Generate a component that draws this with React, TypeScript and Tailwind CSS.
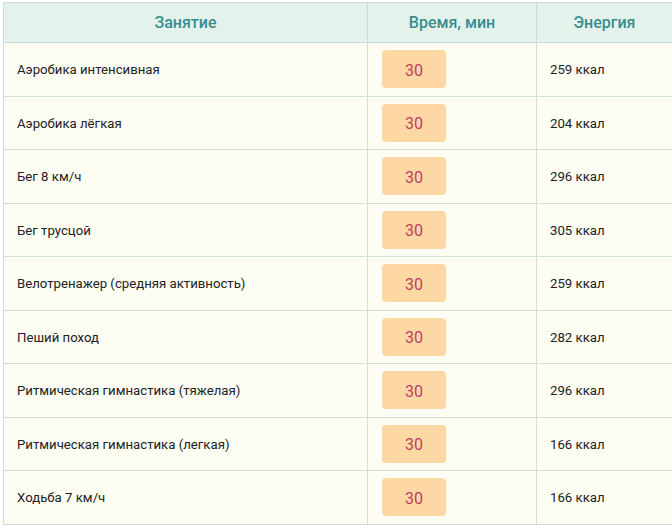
const rows = [
  { name: 'Аэробика интенсивная', kcal: 259 },
  { name: 'Аэробика лёгкая', kcal: 204 },
  { name: 'Бег 8 км/ч', kcal: 296 },
  { name: 'Бег трусцой', kcal: 305 },
  { name: 'Велотренажер (средняя активность)', kcal: 259 },
  { name: 'Пеший поход', kcal: 282 },
  { name: 'Ритмическая гимнастика (тяжелая)', kcal: 296 },
  { name: 'Ритмическая гимнастика (легкая)', kcal: 166 },
  { name: 'Ходьба 7 км/ч', kcal: 166 },
];

export default function App() {
  return (
    <div className="h-[528px] w-[672px] overflow-hidden bg-white pl-[3px] pt-[2px] font-['Roboto',sans-serif]">
      <div className="border-l border-t border-[#c9ddd6] bg-[#fdfdf3]">
        {/* Header */}
        <div className="grid h-[40px] grid-cols-[364px_169px_1fr] border-b border-[#c9ddd6] bg-[#e3f3ec] text-[16px] font-medium text-[#3a8d8e]">
          <div className="flex items-center justify-center border-r border-[#c9ddd6]">Занятие</div>
          <div className="flex items-center justify-center border-r border-[#c9ddd6]">Время, мин</div>
          <div className="flex items-center justify-center">Энергия</div>
        </div>

        {/* Rows */}
        {rows.map((r) => (
          <div
            key={r.name}
            className="grid h-[53.5px] grid-cols-[364px_169px_1fr] border-b border-[#cfe0d9] text-[13.2px] text-[#222]"
          >
            <div className="flex items-center border-r border-[#cfe0d9] pl-[13px] pt-[2px]">{r.name}</div>
            <div className="flex items-center border-r border-[#cfe0d9] pl-[14px]">
              <div className="flex h-[38px] w-[64px] items-center justify-center rounded-[4px] bg-[#fdd8a5] pt-[3px] text-[16px] text-[#c23e5e]">
                30
              </div>
            </div>
            <div className="flex items-center pl-[13px] pt-[2px]">{r.kcal} ккал</div>
          </div>
        ))}
      </div>
    </div>
  );
}
